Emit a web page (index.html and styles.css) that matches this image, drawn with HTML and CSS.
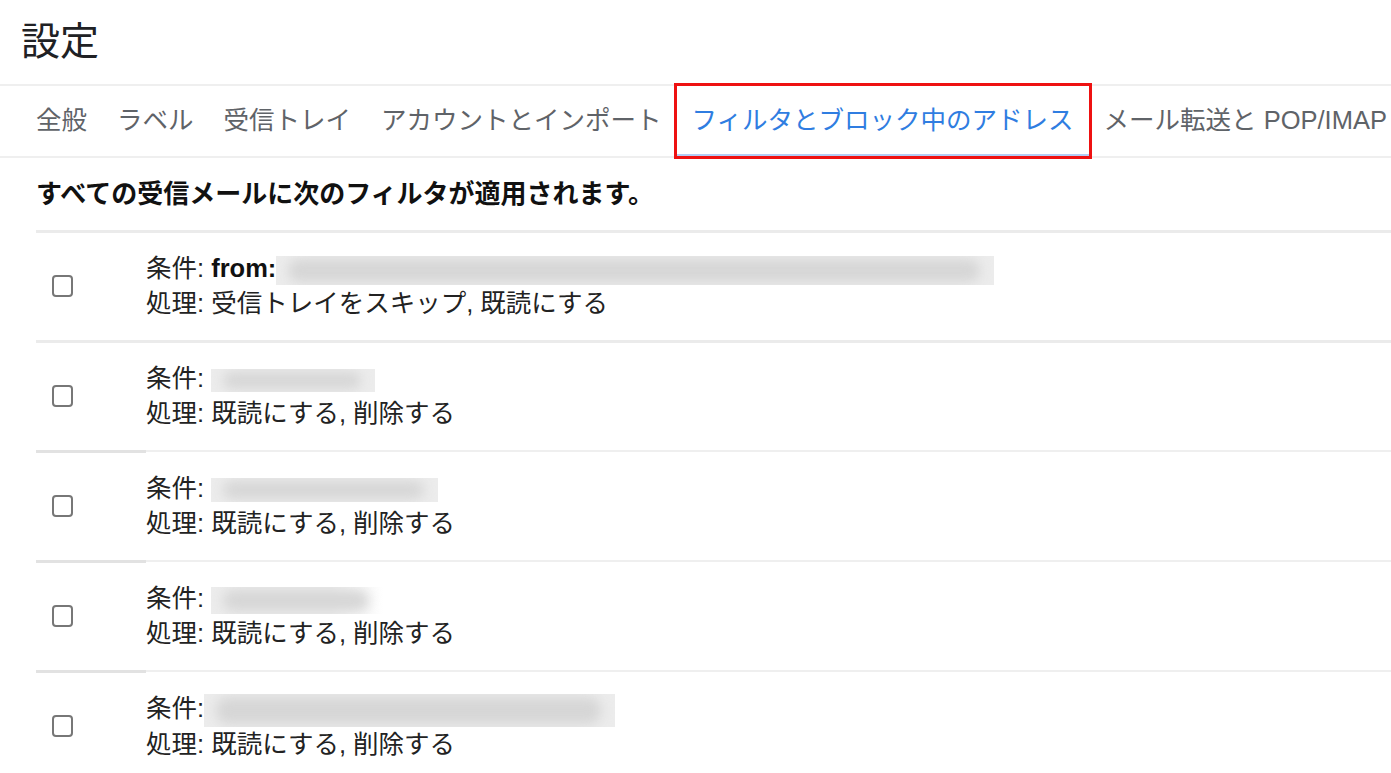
FILE: index.html
```html
<!DOCTYPE html>
<html lang="ja">
<head>
  <meta charset="UTF-8">
  <title>設定</title>
  <link rel="stylesheet" href="styles.css">
</head>
<body>
  <header class="page-header">
    <h1 class="page-title">設定</h1>
  </header>

  <nav class="tabs">
    <a class="tab">全般</a>
    <a class="tab">ラベル</a>
    <a class="tab">受信トレイ</a>
    <a class="tab">アカウントとインポート</a>
    <a class="tab tab-active">フィルタとブロック中のアドレス</a>
    <a class="tab">メール転送と POP/IMAP</a>
  </nav>

  <main class="filters">
    <p class="filters-title">すべての受信メールに次のフィルタが適用されます。</p>

    <div class="filter-row">
      <div class="filter-check"><input type="checkbox"></div>
      <div class="filter-body">
        <div>条件: <b>from:</b><span class="redacted" style="width:718px;height:29px"></span></div>
        <div>処理: 受信トレイをスキップ, 既読にする</div>
      </div>
    </div>

    <div class="filter-row">
      <div class="filter-check"><input type="checkbox"></div>
      <div class="filter-body">
        <div>条件: <span class="redacted" style="width:164px;height:23px"></span></div>
        <div>処理: 既読にする, 削除する</div>
      </div>
    </div>

    <div class="filter-row filter-row-split">
      <div class="filter-check"><input type="checkbox"></div>
      <div class="filter-body">
        <div>条件: <span class="redacted" style="width:227px;height:24px"></span></div>
        <div>処理: 既読にする, 削除する</div>
      </div>
    </div>

    <div class="filter-row filter-row-split">
      <div class="filter-check"><input type="checkbox"></div>
      <div class="filter-body">
        <div>条件: <span class="redacted redacted-fade" style="width:172px;height:27px"></span></div>
        <div>処理: 既読にする, 削除する</div>
      </div>
    </div>

    <div class="filter-row filter-row-split">
      <div class="filter-check"><input type="checkbox"></div>
      <div class="filter-body">
        <div>条件:<span class="redacted" style="width:411px;height:33px"></span></div>
        <div>処理: 既読にする, 削除する</div>
      </div>
    </div>
  </main>
</body>
</html>
```

FILE: styles.css
```css
body {
  margin: 0;
  background-color: #fff;
  color: #202124;
  font-family: "Liberation Sans", "Noto Sans CJK JP", sans-serif;
  overflow: hidden;
}

.page-header {
  box-sizing: border-box;
  height: 84px;
  display: flex;
  align-items: center;
  padding: 0 0 8px 21px;
}

.page-title {
  margin: 0;
  font-size: 39px;
  font-weight: normal;
  color: #202124;
}

.tabs {
  display: flex;
  height: 70px;
  padding-left: 21px;
  border-top: 2px solid #efefef;
  border-bottom: 2px solid #efefef;
  white-space: nowrap;
}

.tab {
  box-sizing: border-box;
  display: flex;
  align-items: center;
  padding: 0 15px 7px;
  font-size: 25.5px;
  color: #5f6368;
  cursor: pointer;
}

.tab-active {
  color: #2f7de1;
  outline: 3px solid #ee1111;
  box-shadow: inset 0 -2px 0 #b3cdf5;
}

.filters {
  padding-left: 36px;
}

.filters-title {
  margin: 0;
  padding: 19px 0 18px;
  line-height: 35px;
  font-size: 26px;
  font-weight: bold;
  color: #111;
}

.filter-row {
  display: grid;
  grid-template-columns: 110px 1fr;
  height: 110px;
}

.filter-check,
.filter-body {
  border-top: 3px solid #ebebeb;
}

.filter-row-split .filter-check {
  border-top-color: #e2e2e2;
}

.filter-row-split .filter-body {
  border-top: 2px solid #efefef;
  padding-top: 19px;
}

.filter-check {
  display: flex;
  align-items: center;
  padding-left: 16px;
  padding-bottom: 2px;
}

.filter-check input {
  appearance: none;
  margin: 0;
  width: 21px;
  height: 22px;
  border: 2px solid #777;
  border-radius: 4px;
  background: #fff;
}

.filter-body {
  padding-top: 18px;
  font-size: 25.5px;
  line-height: 35px;
  color: #222;
}

.filter-body b {
  font-weight: bold;
  color: #111;
}

.redacted {
  position: relative;
  display: inline-block;
  vertical-align: middle;
  overflow: hidden;
  background: #ececec;
}

.redacted::before {
  content: "";
  position: absolute;
  top: 3px;
  bottom: 3px;
  left: 12px;
  right: 14px;
  background: #d6d6d6;
  border-radius: 12px;
  filter: blur(6px);
}

.redacted-fade {
  background: linear-gradient(to right, #ececec 70%, #fff);
}
```
